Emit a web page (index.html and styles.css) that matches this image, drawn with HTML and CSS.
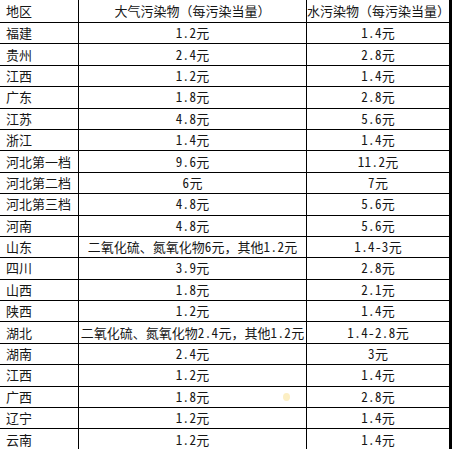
FILE: index.html
```html
<!DOCTYPE html>
<html lang="zh-CN">
<head>
<meta charset="utf-8">
<title>排污费征收标准</title>
<link rel="stylesheet" href="styles.css">
</head>
<body>
<table class="fee">
  <colgroup>
    <col class="c-region">
    <col class="c-air">
    <col class="c-water">
  </colgroup>
  <thead>
    <tr><th class="region">地区</th><th>大气污染物（每污染当量）</th><th>水污染物（每污染当量）</th></tr>
  </thead>
  <tbody>
    <tr><td class="region">福建</td><td><span class="num">1.2</span>元</td><td><span class="num">1.4</span>元</td></tr>
    <tr><td class="region">贵州</td><td><span class="num">2.4</span>元</td><td><span class="num">2.8</span>元</td></tr>
    <tr><td class="region">江西</td><td><span class="num">1.2</span>元</td><td><span class="num">1.4</span>元</td></tr>
    <tr><td class="region">广东</td><td><span class="num">1.8</span>元</td><td><span class="num">2.8</span>元</td></tr>
    <tr><td class="region">江苏</td><td><span class="num">4.8</span>元</td><td><span class="num">5.6</span>元</td></tr>
    <tr><td class="region">浙江</td><td><span class="num">1.4</span>元</td><td><span class="num">1.4</span>元</td></tr>
    <tr><td class="region">河北第一档</td><td><span class="num">9.6</span>元</td><td><span class="num">11.2</span>元</td></tr>
    <tr><td class="region">河北第二档</td><td><span class="num">6</span>元</td><td><span class="num">7</span>元</td></tr>
    <tr><td class="region">河北第三档</td><td><span class="num">4.8</span>元</td><td><span class="num">5.6</span>元</td></tr>
    <tr><td class="region">河南</td><td><span class="num">4.8</span>元</td><td><span class="num">5.6</span>元</td></tr>
    <tr><td class="region">山东</td><td>二氧化硫、氮氧化物<span class="num">6</span>元，其他<span class="num">1.2</span>元</td><td><span class="num">1.4-3</span>元</td></tr>
    <tr><td class="region">四川</td><td><span class="num">3.9</span>元</td><td><span class="num">2.8</span>元</td></tr>
    <tr><td class="region">山西</td><td><span class="num">1.8</span>元</td><td><span class="num">2.1</span>元</td></tr>
    <tr><td class="region">陕西</td><td><span class="num">1.2</span>元</td><td><span class="num">1.4</span>元</td></tr>
    <tr><td class="region">湖北</td><td>二氧化硫、氮氧化物<span class="num">2.4</span>元，其他<span class="num">1.2</span>元</td><td><span class="num">1.4-2.8</span>元</td></tr>
    <tr><td class="region">湖南</td><td><span class="num">2.4</span>元</td><td><span class="num">3</span>元</td></tr>
    <tr><td class="region">江西</td><td><span class="num">1.2</span>元</td><td><span class="num">1.4</span>元</td></tr>
    <tr><td class="region">广西</td><td class="marked"><span class="num">1.8</span>元<span class="dot"></span></td><td><span class="num">2.8</span>元</td></tr>
    <tr><td class="region">辽宁</td><td><span class="num">1.2</span>元</td><td><span class="num">1.4</span>元</td></tr>
    <tr><td class="region">云南</td><td><span class="num">1.2</span>元</td><td><span class="num">1.4</span>元</td></tr>
  </tbody>
</table>
</body>
</html>
```

FILE: styles.css
```css
html, body {
  margin: 0;
  padding: 0;
  background: #ffffff;
}

body {
  width: 452px;
  height: 449px;
  overflow: hidden;
}

.fee {
  border-collapse: separate;
  border-spacing: 0;
  table-layout: fixed;
  width: 452px;
  font-family: "Noto Sans CJK SC", sans-serif;
  font-size: 13px;
  color: #161616;
}

.c-region { width: 79px; }
.c-air { width: 228px; }
.c-water { width: 145px; }

.fee th,
.fee td {
  padding: 0;
  height: 20.4px;
  line-height: 20px;
  text-align: center;
  font-weight: normal;
  white-space: nowrap;
  border-right: 1px solid #000;
  border-bottom: 1px solid #000;
}

.fee th {
  height: 22px;
  line-height: 22px;
}

.fee th:last-child,
.fee td:last-child {
  border-right: 3px solid #000;
}

.fee .region {
  text-align: left;
  padding-left: 6px;
}

.num {
  font-feature-settings: "hwid" 1;
  letter-spacing: 0.4px;
}

.marked {
  position: relative;
}

.dot {
  position: absolute;
  left: 204px;
  top: 6px;
  width: 7px;
  height: 8px;
  border-radius: 50%;
  background: #fcefc4;
}
```
